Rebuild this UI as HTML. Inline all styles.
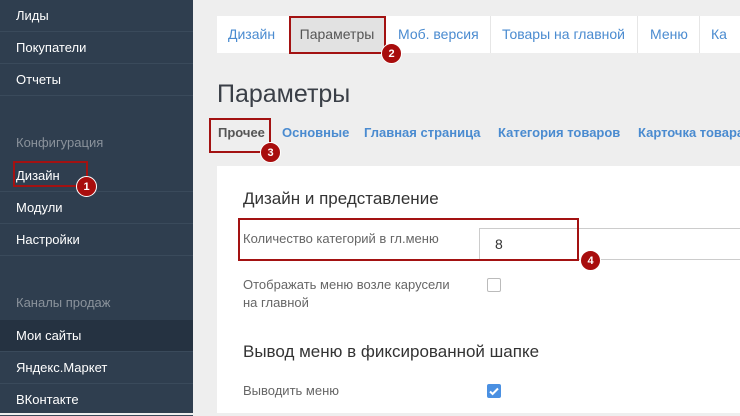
<!DOCTYPE html>
<html><head><meta charset="utf-8"><style>
*{margin:0;padding:0;box-sizing:border-box}
body{width:740px;height:413px;overflow:hidden;background:#eeeeee;font-family:"Liberation Sans","DejaVu Sans",sans-serif;position:relative}
.sb{position:absolute;left:0;top:0;width:193px;height:413px;background:#2f3e4f}
.it{position:absolute;left:0;width:193px;height:32px;line-height:31px;padding-left:16px;color:#fff;font-size:13px;border-bottom:1px solid #3a4a5b}
.lb{position:absolute;left:16px;color:#8a929b;font-size:13px}
.a{position:absolute}
.tabs{position:absolute;left:217px;top:16px;width:523px;height:37px;background:#fff}
.tab{position:absolute;top:0;height:37px;line-height:37px;color:#4a8bd0;font-size:14px}
.sep{position:absolute;top:0;width:1px;height:37px;background:#e6e6e6}
.red{position:absolute;border:2px solid #a31212}
.bd{position:absolute;width:21px;height:21px;border-radius:50%;background:#a80d0d;color:#fff;font-size:11px;font-weight:bold;text-align:center;line-height:21px;border:1px solid #fff}
.sub{position:absolute;top:125px;font-size:13px;font-weight:bold;color:#4a8bd0}
.card{position:absolute;left:217px;top:166px;width:523px;height:247px;background:#fff}
.t{position:absolute;color:#666;font-size:13px}
</style></head><body>
<div class="sb">
<div class="it" style="top:0">Лиды</div>
<div class="it" style="top:32px">Покупатели</div>
<div class="it" style="top:64px">Отчеты</div>
<div class="lb" style="top:135px">Конфигурация</div>
<div class="it" style="top:160px;border-top:none">Дизайн</div>
<div class="it" style="top:192px">Модули</div>
<div class="it" style="top:224px">Настройки</div>
<div class="lb" style="top:295px">Каналы продаж</div>
<div class="it" style="top:320px;background:#253241">Мои сайты</div>
<div class="it" style="top:352px">Яндекс.Маркет</div>
<div class="it" style="top:384px">ВКонтакте</div>
</div>
<div class="red" style="left:13px;top:161px;width:75px;height:26px"></div>
<div class="bd" style="left:76px;top:176px">1</div>

<div class="tabs">
<div class="tab" style="left:11px">Дизайн</div>
<div class="tab" style="left:72px;width:96px;background:#e2e2e2;color:#555;text-align:center">Параметры</div>
<div class="tab" style="left:181px">Моб. версия</div>
<div class="sep" style="left:273px"></div>
<div class="tab" style="left:285px">Товары на главной</div>
<div class="sep" style="left:420px"></div>
<div class="tab" style="left:433px">Меню</div>
<div class="sep" style="left:482px"></div>
<div class="tab" style="left:494px">Ка</div>
</div>
<div class="red" style="left:289px;top:16px;width:97px;height:38px"></div>
<div class="bd" style="left:381px;top:43px">2</div>

<div class="a" style="left:217px;top:80px;font-size:25px;color:#3a3f47">Параметры</div>
<div class="sub" style="left:218px;color:#555">Прочее</div>
<div class="sub" style="left:282px">Основные</div>
<div class="sub" style="left:364px">Главная страница</div>
<div class="sub" style="left:498px">Категория товаров</div>
<div class="sub" style="left:638px;white-space:nowrap">Карточка товара</div>
<div class="red" style="left:209px;top:118px;width:62px;height:35px"></div>
<div class="bd" style="left:260px;top:142px">3</div>

<div class="card"></div>
<div class="a" style="left:243px;top:189px;font-size:17px;color:#333">Дизайн и представление</div>
<div class="t" style="left:243px;top:231px">Количество категорий в гл.меню</div>
<div class="a" style="left:479px;top:228px;width:262px;height:32px;border:1px solid #ccc;background:#fff;font-size:14px;color:#333;padding:7px 0 0 15px">8</div>
<div class="red" style="left:238px;top:218px;width:341px;height:43px"></div>
<div class="bd" style="left:580px;top:250px">4</div>
<div class="t" style="left:243px;top:276px;line-height:18px">Отображать меню возле карусели<br>на главной</div>
<div class="a" style="left:487px;top:278px;width:14px;height:14px;border:1px solid #bbb;border-radius:2px;background:#fff"></div>
<div class="a" style="left:243px;top:342px;font-size:17px;color:#333">Вывод меню в фиксированной шапке</div>
<div class="t" style="left:243px;top:383px">Выводить меню</div>
<div class="a" style="left:487px;top:384px;width:14px;height:14px;border-radius:2px;background:#4a90e2"><svg width="14" height="14"><path d="M3 7.5l2.6 2.5L11 4.5" stroke="#fff" stroke-width="2" fill="none"/></svg></div>
</body></html>
